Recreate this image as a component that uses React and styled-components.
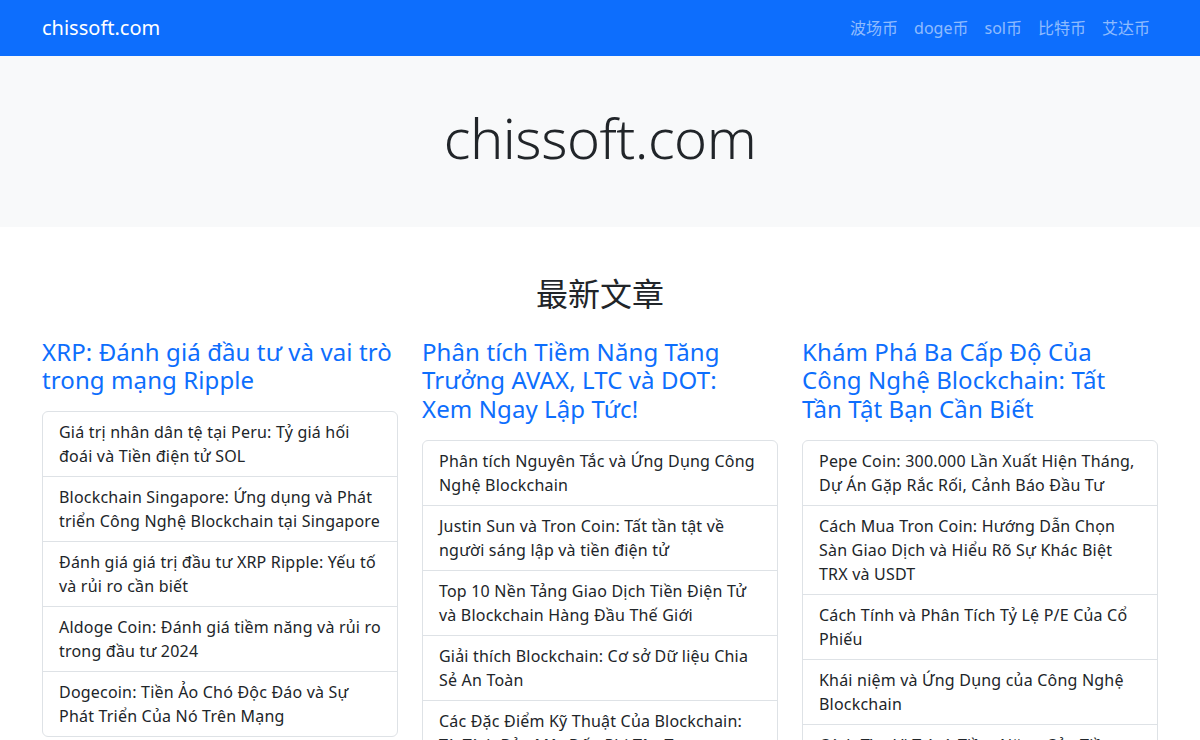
import React from 'react'
import styled, { createGlobalStyle } from 'styled-components'

// styles starts here ....

const GlobalStyle = createGlobalStyle`
  * { box-sizing: border-box; }
  body {
    margin: 0;
    font-family: "Noto Sans", "Noto Sans CJK SC", sans-serif;
    font-size: 16px;
    line-height: 1.5;
    color: #212529;
    background: #fff;
  }
  a { text-decoration: none; }
`

const NavBar = styled.nav`
  background-color: #0d6efd;
  height: 56px;
`
const NavInner = styled.div`
  max-width: 1140px;
  margin: 0 auto;
  padding: 0 12px;
  height: 100%;
  display: flex;
  align-items: center;
  justify-content: space-between;
`
const Brand = styled.a`
  font-size: 20px;
  color: #fff;
  line-height: 30px;
`
const NavList = styled.ul`
  display: flex;
  list-style: none;
  margin: 0;
  padding: 0;
`
const NavLink = styled.a`
  display: block;
  padding: 8px;
  color: rgba(255, 255, 255, 0.55);
  font-size: 16px;
`

const Hero = styled.header`
  background-color: #f8f9fa;
  padding: 48px 0;
  text-align: center;
`
const HeroTitle = styled.h1`
  margin: 0 0 8px;
  font-size: 56px;
  font-weight: 300;
  line-height: 1.2;
  letter-spacing: -0.5px;
`

const Main = styled.main`
  max-width: 1140px;
  margin: 48px auto 0;
  padding: 0 12px;
`
const SectionTitle = styled.h2`
  margin: 0 0 8px;
  font-size: 32px;
  font-weight: 400;
  line-height: 1.2;
  text-align: center;
`
const Row = styled.div`
  display: grid;
  grid-template-columns: repeat(3, 1fr);
  column-gap: 24px;
  margin-top: 24px;
`
const Column = styled.section`
  display: flex;
  flex-direction: column;
`
const ColumnTitle = styled.h4`
  margin: 0 0 16px;
  font-size: 24px;
  font-weight: 400;
  line-height: 1.2;
  letter-spacing: 0.1px;
  a { color: #0d6efd; }
`
const TitleLine = styled.span`
  display: block;
  white-space: nowrap;
`
const ListGroup = styled.ul`
  list-style: none;
  margin: 0;
  padding: 0;
  border: 1px solid #dee2e6;
  border-radius: 6px;
`
const ListItem = styled.li`
  padding: 8px 16px;
  letter-spacing: 0.2px;
  border-top: ${p => (p.$first ? 'none' : '1px solid #dee2e6')};
  a { color: #212529; }
`

// styles end here......

const links = ['波场币', 'doge币', 'sol币', '比特币', '艾达币']

const columns = [
  {
    title: ['XRP: Đánh giá đầu tư và vai trò', 'trong mạng Ripple'],
    items: [
      'Giá trị nhân dân tệ tại Peru: Tỷ giá hối đoái và Tiền điện tử SOL',
      'Blockchain Singapore: Ứng dụng và Phát triển Công Nghệ Blockchain tại Singapore',
      'Đánh giá giá trị đầu tư XRP Ripple: Yếu tố và rủi ro cần biết',
      'Aldoge Coin: Đánh giá tiềm năng và rủi ro trong đầu tư 2024',
      'Dogecoin: Tiền Ảo Chó Độc Đáo và Sự Phát Triển Của Nó Trên Mạng',
    ],
  },
  {
    title: ['Phân tích Tiềm Năng Tăng', 'Trưởng AVAX, LTC và DOT:', 'Xem Ngay Lập Tức!'],
    items: [
      'Phân tích Nguyên Tắc và Ứng Dụng Công Nghệ Blockchain',
      'Justin Sun và Tron Coin: Tất tần tật về người sáng lập và tiền điện tử',
      'Top 10 Nền Tảng Giao Dịch Tiền Điện Tử và Blockchain Hàng Đầu Thế Giới',
      'Giải thích Blockchain: Cơ sở Dữ liệu Chia Sẻ An Toàn',
      'Các Đặc Điểm Kỹ Thuật Của Blockchain: Từ Tính Bảo Mật Đến Phi Tập Trung',
    ],
  },
  {
    title: ['Khám Phá Ba Cấp Độ Của', 'Công Nghệ Blockchain: Tất', 'Tần Tật Bạn Cần Biết'],
    items: [
      'Pepe Coin: 300.000 Lần Xuất Hiện Tháng, Dự Án Gặp Rắc Rối, Cảnh Báo Đầu Tư',
      'Cách Mua Tron Coin: Hướng Dẫn Chọn Sàn Giao Dịch và Hiểu Rõ Sự Khác Biệt TRX và USDT',
      'Cách Tính và Phân Tích Tỷ Lệ P/E Của Cổ Phiếu',
      'Khái niệm và Ứng Dụng của Công Nghệ Blockchain',
      'Cách Tìm Vị Trí và Tiềm Năng Của Tiền Điện Tử',
    ],
  },
]

const App = () => {
  return (
    <>
      <GlobalStyle />
      <NavBar>
        <NavInner>
          <Brand href="#">chissoft.com</Brand>
          <NavList>
            {links.map(l => (
              <li key={l}>
                <NavLink href="#">{l}</NavLink>
              </li>
            ))}
          </NavList>
        </NavInner>
      </NavBar>

      <Hero>
        <HeroTitle>chissoft.com</HeroTitle>
      </Hero>

      <Main>
        <SectionTitle>最新文章</SectionTitle>
        <Row>
          {columns.map(col => (
            <Column key={col.title[0]}>
              <ColumnTitle>
                <a href="#">
                  {col.title.map(line => (
                    <TitleLine key={line}>{line}</TitleLine>
                  ))}
                </a>
              </ColumnTitle>
              <ListGroup>
                {col.items.map((item, i) => (
                  <ListItem key={item} $first={i === 0}>
                    <a href="#">{item}</a>
                  </ListItem>
                ))}
              </ListGroup>
            </Column>
          ))}
        </Row>
      </Main>
    </>
  )
}

export default App
